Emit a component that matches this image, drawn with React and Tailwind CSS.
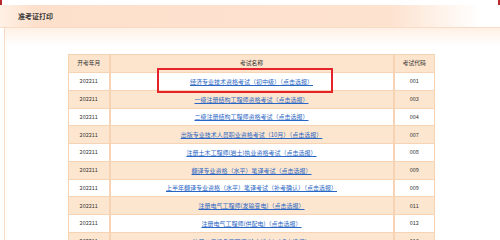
import React from "react";

const exams = [
  { month: "202211", name: "经济专业技术资格考试（初中级）（点击选报）", code: "001" },
  { month: "202211", name: "一级注册结构工程师资格考试（点击选报）", code: "003" },
  { month: "202211", name: "二级注册结构工程师资格考试（点击选报）", code: "004" },
  { month: "202211", name: "出版专业技术人员职业资格考试（10月）（点击选报）", code: "007" },
  { month: "202211", name: "注册土木工程师(岩土)执业资格考试（点击选报）", code: "008" },
  { month: "202211", name: "翻译专业资格（水平）笔译考试（点击选报）", code: "009" },
  { month: "202211", name: "上半年翻译专业资格（水平）笔译考试（补考确认）（点击选报）", code: "009" },
  { month: "202211", name: "注册电气工程师(发输变电)（点击选报）", code: "011" },
  { month: "202211", name: "注册电气工程师(供配电)（点击选报）", code: "012" },
  { month: "202211", name: "注册公用设备工程师(给水排水)（点击选报）", code: "013" },
];

const ExamRow = ({ exam, striped }) => (
  <tr className={striped ? "bg-[#fde6cf]" : "bg-white"}>
    <td className="h-[17.75px] border border-[#f6d3b3] text-center text-[#333] text-[5.5px]">{exam.month}</td>
    <td className="h-[17.75px] border-x-2 border-y border-[#f6d3b3] text-center text-[6px]">
      <a href="#" className="text-[#2a66c4] underline">
        {exam.name}
      </a>
    </td>
    <td className="h-[17.75px] border border-[#f6d3b3] text-center text-[#333] text-[5.5px]">{exam.code}</td>
  </tr>
);

export default function App() {
  return (
    <div className="relative w-[500px] h-[240px] overflow-hidden bg-white font-['Noto_Sans_CJK_SC',sans-serif]">
      <div className="h-[5px] flex justify-between">
        <span className="w-[2px] bg-[#b8282c]" />
        <span className="w-[2px] bg-[#b8282c]" />
      </div>

      <div className="h-[23px] flex items-center pl-[18px] border-b border-[#f9dcc6] bg-[linear-gradient(to_right,#fff1e6,#fde0cc_7%,#fde2cf_78%,#ffffff_96%)]">
        <span className="text-[7px] font-bold text-[#3a3a3a]">准考证打印</span>
      </div>

      <div className="ml-[4px] h-[212px] border-l border-[#f7dac6] bg-[linear-gradient(to_bottom,#fff0e5,#ffffff_18px)] pt-[26px] pl-[63px]">
        <table className="w-[367px] border-collapse border border-[#f6d3b3]">
          <thead>
            <tr className="bg-[#fde4cc]">
              <th className="w-[41px] h-[18px] border border-[#f6d3b3] font-normal text-[5.8px] text-[#333]">开考年月</th>
              <th className="h-[18px] border-x-2 border-y border-[#f6d3b3] font-normal text-[5.8px] text-[#333]">考试名称</th>
              <th className="w-[41px] h-[18px] border border-[#f6d3b3] font-normal text-[5.8px] text-[#333]">考试代码</th>
            </tr>
          </thead>
          <tbody>
            {exams.map((exam, i) => (
              <ExamRow key={i} exam={exam} striped={i % 2 === 1} />
            ))}
          </tbody>
        </table>
      </div>

      {/* highlight box around the first exam */}
      <div className="absolute left-[157px] top-[68px] w-[176px] h-[25px] border-2 border-[#e3242b]" />
    </div>
  );
}
